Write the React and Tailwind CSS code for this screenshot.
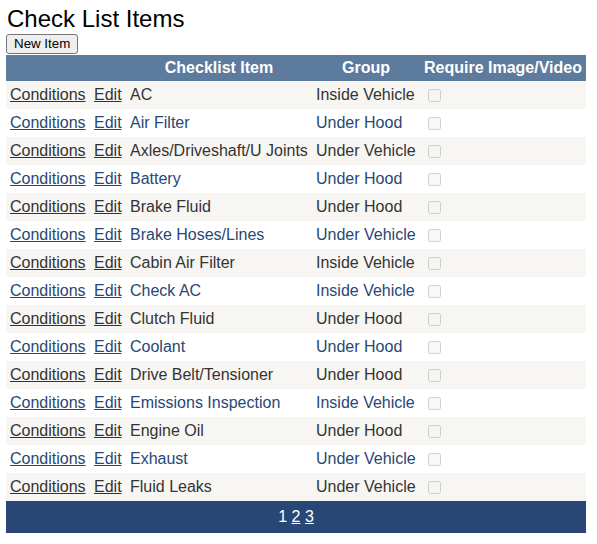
import React from "react";

const items = [
  ["AC", "Inside Vehicle"],
  ["Air Filter", "Under Hood"],
  ["Axles/Driveshaft/U Joints", "Under Vehicle"],
  ["Battery", "Under Hood"],
  ["Brake Fluid", "Under Hood"],
  ["Brake Hoses/Lines", "Under Vehicle"],
  ["Cabin Air Filter", "Inside Vehicle"],
  ["Check AC", "Inside Vehicle"],
  ["Clutch Fluid", "Under Hood"],
  ["Coolant", "Under Hood"],
  ["Drive Belt/Tensioner", "Under Hood"],
  ["Emissions Inspection", "Inside Vehicle"],
  ["Engine Oil", "Under Hood"],
  ["Exhaust", "Under Vehicle"],
  ["Fluid Leaks", "Under Vehicle"],
];

const App = () => {
  return (
    <div className="bg-white min-h-[544px] px-[6px] font-['Liberation_Sans',Arial,sans-serif]">
      {/* Title */}
      <h1 className="pt-[5px] h-[34px] text-[24px] leading-[27px] font-normal text-black pl-[1px]">
        Check List Items
      </h1>

      <div className="flex h-[21px] items-start">
        <button className="block h-[20px] px-[7px] text-[13.333px] leading-[16px] text-black bg-[#efefef] border border-[#767676] rounded-[3px]">
          New Item
        </button>
      </div>

      {/* Grid */}
      <table className="w-[580px] border-collapse text-[16px] table-fixed">
        <colgroup>
          <col className="w-[84px]" />
          <col className="w-[36px]" />
          <col className="w-[186px]" />
          <col className="w-[108px]" />
          <col className="w-[166px]" />
        </colgroup>
        <thead>
          <tr className="bg-[#5D7B9D] text-white font-bold h-[26px]">
            <th className="p-0"></th>
            <th className="p-0"></th>
            <th className="px-[4px] p-0 text-center whitespace-nowrap">Checklist Item</th>
            <th className="px-[4px] p-0 text-center whitespace-nowrap">Group</th>
            <th className="px-[4px] p-0 text-center whitespace-nowrap">Require Image/Video</th>
          </tr>
        </thead>
        <tbody>
          {items.map(([name, group], i) => {
            const alt = i % 2 === 1;
            return (
              <tr
                key={name}
                className={
                  alt
                    ? "h-[28px] bg-white text-[#284775]"
                    : "h-[28px] bg-[#F7F6F3] text-[#333333]"
                }
              >
                <td className="px-[4px] whitespace-nowrap">
                  <a href="#" className="underline">Conditions</a>
                </td>
                <td className="px-[4px] whitespace-nowrap">
                  <a href="#" className="underline">Edit</a>
                </td>
                <td className="px-[4px] whitespace-nowrap">{name}</td>
                <td className="px-[4px] whitespace-nowrap">{group}</td>
                <td className="px-[4px]">
                  <input
                    type="checkbox"
                    disabled
                    className="align-middle w-[13px] h-[13px] ml-[4px] mr-[3px] my-[3px]"
                  />
                </td>
              </tr>
            );
          })}
        </tbody>
        <tfoot>
          <tr className="bg-[#284775] text-white h-[32px]">
            <td colSpan={5} className="text-center">
              <span>1</span>{" "}
              <a href="#" className="underline">2</a>{" "}
              <a href="#" className="underline">3</a>
            </td>
          </tr>
        </tfoot>
      </table>
    </div>
  );
};

export default App;
